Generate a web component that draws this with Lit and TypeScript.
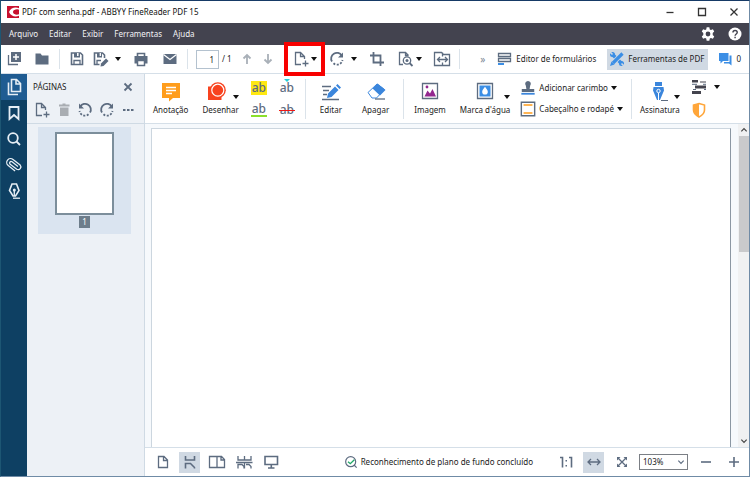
import { LitElement, html, css, svg, nothing } from "lit";
import { customElement, property, state } from "lit/decorators.js";
import { classMap } from "lit/directives/class-map.js";

// Every glyph is drawn on an 18 x 18 grid.
const icons: Record<string, unknown> = {
  logo: svg`<path d="M0 0h18v18H0z" fill="#c8102e"/><path d="M18 3.500C13 1 5.500 2.500 3 9c2.500 6.500 10 8 15 5.500v-2c-5 1.500-8-.5-8-3.500s3-5 8-3.500z" fill="#fff"/><circle cx="12" cy="9" r="3" fill="#c8102e"/>`,
  create: svg`<path d="M6 2h10v10H6z" fill="currentColor"/><path d="M3.500 5v9.500H13" class="l"/><path d="M11 4v6M8 7h6" stroke="#fff" stroke-width="1.500" fill="none"/>`,
  folder: svg`<path d="M2.500 3.500h5l1.500 2h6.500v9h-13z" fill="currentColor"/>`,
  save: svg`<path d="M3.500 3h9l2 2v9.500h-11z" class="l m"/><path d="M6 3h6v4.500H6z" fill="currentColor"/><path d="M9.800 3v3" stroke="#fff" stroke-width="1.500"/><path d="M6 14.500v-4h6v4" class="l"/>`,
  saveEdit: svg`<path d="M7.500 14.500h-5V3h8l2 2v3" class="l m"/><path d="M5 3h5v4.500H5z" fill="currentColor"/><path d="M8.300 3v3" stroke="#fff" stroke-width="1.300"/><path d="M5 14.500v-4h4" class="l"/><path d="M8.500 16.500l.5-3 5-5 2.500 2.500-5 5z" fill="currentColor"/>`,
  print: svg`<path d="M5.500 6V3.500h7V6" class="l m"/><path d="M2.500 6h13v7.500h-13z" fill="currentColor"/><path d="M5.500 10.500h7v5h-7z" fill="#fff" stroke="currentColor" stroke-width="1.500"/>`,
  mail: svg`<path d="M2.500 4h13v10h-13z" fill="currentColor"/><path d="M2.500 4.500l6.500 5 6.500-5" stroke="#fff" stroke-width="1.200" fill="none"/>`,
  up: svg`<path d="M9 14V5M5.500 8.500L9 5l3.500 3.500" class="l w"/>`,
  down: svg`<path d="M9 4v9M5.500 9.500L9 13l3.500-3.500" class="l w"/>`,
  pageAdd: svg`<path d="M9 14.500H3.500v-12h5l4 4V9M8.500 2.500v4h4" class="l"/><path d="M13.500 10.500v6M10.500 13.500h6" class="l"/>`,
  rotateRight: svg`<path d="M13.700 5.500A5.500 5.500 0 0 0 4 11.500" class="l w"/><path d="M15 2.500v5h-5z" fill="currentColor"/><path d="M5.500 13.300A5.500 5.500 0 0 0 14.500 10" class="l w" stroke-dasharray="2 1.500"/>`,
  rotateLeft: svg`<path d="M4.300 5.500A5.500 5.500 0 0 1 14 11.500" class="l w"/><path d="M3 2.500v5h5z" fill="currentColor"/><path d="M12.500 13.300A5.500 5.500 0 0 1 3.500 10" class="l w" stroke-dasharray="2 1.500"/>`,
  crop: svg`<path d="M5.500 2v10.500H16M2 5.500h10.500V16" class="l w"/>`,
  pageSearch: svg`<path d="M6 14.500H2.500v-12h6l3 3M8.500 2.500v3h3" class="l"/><circle cx="10" cy="10.500" r="3.700" class="l"/><circle cx="10" cy="10.500" r="1.500" fill="currentColor"/><path d="M12.500 13l3 3" class="l w"/>`,
  pageWidth: svg`<path d="M1.500 7V2.500h7l2 2h6V7M1.500 11.500v4h15v-4M1.500 6v6M16.500 6v6M9.500 2.500v4M9.500 12.500v3" class="l"/><path d="M5 9.500h9M7 7L4.500 9.500 7 12M12 7l2.500 2.500L12 12" class="l"/>`,
  form: svg`<path d="M2.500 3.500h12v3h-12zM2.500 8.500h12v3h-12z" class="l"/><path d="M2 13h6v2H2z" fill="#3b8ee5"/>`,
  tools: svg`<path d="M4 4l10 10" stroke="#3b8ee5" stroke-width="3.500"/><circle cx="4.500" cy="4.500" r="2.500" fill="#3b8ee5"/><circle cx="13.500" cy="13.500" r="2.500" fill="#3b8ee5"/><path d="M2 2l2.500 2.500M13.500 13.500L16 16" stroke="#d0d9e3" stroke-width="1.600"/><path d="M14 4L4 14" stroke="#d0d9e3" stroke-width="5"/><path d="M14.500 3.500L5 13" stroke="#3b8ee5" stroke-width="3.200"/><path d="M3.500 11.500l3 3L2 16z" fill="#3b8ee5"/>`,
  chat: svg`<path d="M3 3h9.500v8H7l-2.500 2.500V11H3z" fill="#3b8ee5"/><path d="M13.500 5.500H15.500v10L13 13.500H8v-1.500h5.500z" fill="#3b8ee5"/>`,
  gear: svg`<path fill="#fff" fill-rule="evenodd" d="M7.500 1.500h3l.5 2.300 1.300.7 2.200-.8L16 6.300 14.300 8v2l1.700 1.700-1.500 2.600-2.200-.8-1.300.7-.5 2.300h-3L7 14.200l-1.300-.7-2.200.8L2 11.700 3.700 10V8L2 6.300l1.500-2.600 2.200.8L7 3.800zM9 6.300a2.700 2.700 0 1 0 0 5.400 2.700 2.700 0 0 0 0-5.400z"/>`,
  help: svg`<circle cx="9" cy="9" r="7.300" fill="#fff"/><path d="M6.700 7.300c0-3 4.800-3 4.800 0 0 1.700-2.400 1.700-2.400 3.700M9.100 12v1.800" stroke="#43434f" stroke-width="1.600" fill="none"/>`,
  pages: svg`<path d="M6.500 1.500h5l4 4v8h-9z M11 1.500V6h4.500" class="l m"/><path d="M3.500 4.500v12H13" class="l m"/>`,
  bookmark: svg`<path d="M4.500 3h9v12L9 11l-4.500 4z" class="l w"/>`,
  search: svg`<circle cx="8" cy="8" r="4.800" class="l w"/><path d="M11.500 11.500l3.500 3.500" class="l w"/>`,
  clip: svg`<path transform="rotate(38 9 9)" d="M13.500 13H4.800a3.900 3.900 0 0 1 0-7.800h9a2.800 2.800 0 0 1 0 5.500H5.500a1.500 1.500 0 0 1 0-3h7.500" class="l"/>`,
  pen: svg`<path d="M7 2h4.500l2.500 6.500-3.500 5.500H8L4.500 8.500z" class="l m"/><path d="M9.300 8v6" class="l"/><circle cx="9.300" cy="8" r="1.500" fill="currentColor"/><path d="M8 16.200h7" class="l"/>`,
  close: svg`<path d="M5.500 5.500l7 7M12.500 5.500l-7 7" class="l w"/>`,
  trash: svg`<path d="M5 6.500h8.500V15H5zM4 3.500h3.500v-1h3v1h4v2H4z" fill="currentColor"/>`,
  more: svg`<path d="M4 8h2.500v2H4zM8 8h2.500v2H8zM12 8h2.500v2H12z" fill="currentColor"/>`,
  note: svg`<path d="M0 1h18v15h-7l-4 3.500V16H0z" fill="#ff9d1c"/><path d="M4 5.500h10M4 8.500h10M4 11.500h6" stroke="#fff" stroke-width="1.300"/>`,
  draw: svg`<path d="M0 4.500h13.500V18H0z" fill="#f8431f"/><circle cx="9.800" cy="8.200" r="8" fill="#f8431f"/><circle cx="9.800" cy="8.200" r="6" fill="#f8431f" stroke="#fff" stroke-width="1.200"/>`,
  edit: svg`<path d="M0 4.500h9M1 8.500h6M1 12.500h4M0 17.500h17" stroke="currentColor" stroke-width="1.300"/><path d="M5 16l1-4.500 7-7 3.500 3.500-7 7zM14 3.500L15.500 2l3.500 3.500L17.500 7z" fill="#3b86dc"/>`,
  erase: svg`<path d="M1 10.500L10 2l7.500 5.500-8 8.500H5z" fill="#fff" stroke="#3b86dc" stroke-width="1"/><path d="M5.500 6.500l5-5L18.500 8 13 13.500z" fill="#3b86dc"/><path d="M8 17h10" stroke="currentColor" stroke-width="1.300"/>`,
  image: svg`<path d="M1.500 1.500h15v15h-15z" class="l"/><path d="M3.500 14.500l3-6 2.500 3L11.500 7l3.500 7.500z" fill="#93278f"/><circle cx="6" cy="5" r="1.400" fill="#93278f"/>`,
  water: svg`<path d="M1.500 1.500h15v15h-15z" class="l"/><path d="M3.500 3.500h11v11h-11z" fill="#3b8ee5"/><path d="M9 4.700c2 2.500 2.800 3.700 2.800 5A2.700 2.700 0 0 1 9 12.500a2.700 2.700 0 0 1-2.800-2.800C6.200 8.400 7 7.200 9 4.700z" fill="#fff"/>`,
  stamp: svg`<path d="M9 1a3.300 3.300 0 0 1 2.500 5.300L10.800 10H16v3.500H2V10h5.200l-.7-3.700A3.300 3.300 0 0 1 9 1z" fill="currentColor"/><path d="M1.500 15.500h15" stroke="#3b86dc" stroke-width="2"/>`,
  header: svg`<path d="M1.500 1.500h15v15h-15z" class="l m"/><path d="M4 4.500h10M4 13.500h10" stroke="#ff9d1c" stroke-width="1.800"/>`,
  sign: svg`<path d="M6 0h7v4H6zM4.500 5h10l.5 3.500L11 18H8L4 8.500z" fill="#3b86dc"/><circle cx="9.500" cy="9" r="1.700" fill="#3b86dc" stroke="#fff"/><path d="M9.500 11v7" stroke="#fff"/><path d="M12 18.500h7" stroke="currentColor"/>`,
  redact: svg`<path d="M2 2h6v2.500H2zM2 13h9v3H2z" fill="#44444e"/><path d="M2 6.300h5M13 6.300h3M3 11.500h3M14 11.500h2" stroke="currentColor"/><path d="M5 7.500h11v3H5zM10 3.500h6v1h-6z" fill="#44444e"/>`,
  shield: svg`<path d="M9 2.500l5.500 1.500V9c0 3.500-2.500 5.500-5.500 7-3-1.500-5.500-3.500-5.500-7V4z" fill="none" stroke="#ffa63a" stroke-width="1.600"/><path d="M9 2.500V16C6 14.500 3.500 12.500 3.500 9V4z" fill="#ffa63a"/>`,
  single: svg`<path d="M4.500 3.500h5.500l3.500 3.500v7.500h-9z M9.500 3.500v4h4" class="l"/>`,
  scroll: svg`<path d="M4.500 3v4h9V3M4.500 15.500v-5h5l4 4v1M9.500 10.500l4 4" class="l m"/>`,
  double: svg`<path d="M1.500 3.500H9v11H1.500zM9 3.500h4.500l3 3v8H9M13 3.500v3.500h3.500" class="l"/>`,
  doubleScroll: svg`<path d="M3 3v4h13V3M9.500 3v4M1 9.500h16.500M3 15.500v-4h4l2 2v2M9.500 9.500v6M11 11.500h3l2 2v2" class="l"/>`,
  screen: svg`<path d="M3 3.500h12.500v8H3zM9.300 11.500v3.500M6 15h6.500" class="l m"/>`,
  checked: svg`<circle cx="8.500" cy="8.500" r="7.500" class="l w"/><path d="M13.500 13.500l4 4" class="l w"/><path d="M4.500 8.500l3.500 3 6-6" stroke="#1fa866" stroke-width="2" fill="none"/>`,
  actual: svg`<path d="M3 4.500h2.500v10M12 4.500h2.500v10" class="l m"/><path d="M8.500 7H10v1.500H8.500zM8.500 12H10v1.500H8.500z" fill="currentColor"/>`,
  fitWidth: svg`<path d="M3 9h12M6 6L3 9l3 3M12 6l3 3-3 3" class="l"/>`,
  fitPage: svg`<path d="M4.500 4.500l9 9M13.500 4.500l-9 9" class="l"/><path d="M4 7.500V4h3.500zM10.500 4H14v3.500zM14 10.500V14h-3.500zM7.500 14H4v-3.500z" fill="currentColor"/>`,
  minus: svg`<path d="M4 9h10" class="l m"/>`,
  plus: svg`<path d="M4 9h10M9 4v10" class="l m"/>`,
  min: svg`<path d="M5.500 9.500h7" class="l"/>`,
  max: svg`<path d="M5.500 5.500h7v7h-7z" class="l"/>`,
  winClose: svg`<path d="M5.500 5.500l7 7M12.500 5.500l-7 7" class="l"/>`,
  chevUp: svg`<path d="M5 11l4-4 4 4" class="l w"/>`,
  chevDown: svg`<path d="M5 7l4 4 4-4" class="l w"/>`,
};

const icon = (name: string, size = "") =>
  html`<svg class="icon ${size}" viewBox="0 0 18 18" aria-hidden="true">${icons[name]}</svg>`;
const caret = html`<svg class="caret" viewBox="0 0 6 4" aria-hidden="true"><path d="M0 0h6L3 4z" fill="#111"/></svg>`;

const shared = css`
  * {
    box-sizing: border-box;
  }
  :host {
    display: block;
  }
  button {
    display: flex;
    align-items: center;
    padding: 0;
    border: 0;
    background: none;
    color: inherit;
    font: inherit;
    white-space: nowrap;
  }
  .icon {
    display: block;
    flex: none;
    width: 18px;
    height: 18px;
    overflow: visible;
  }
  .icon.small {
    width: 12px;
    height: 12px;
  }
  .icon.medium {
    width: 16px;
    height: 16px;
  }
  .caret {
    display: block;
    flex: none;
    width: 6px;
    height: 4px;
  }
  .l {
    fill: none;
    stroke: currentColor;
    stroke-width: 1.3;
  }
  .m {
    stroke-width: 1.6;
  }
  .w {
    stroke-width: 1.8;
  }
  .sep {
    flex: none;
    width: 1px;
    background: #dbe3ea;
  }
  .slate {
    color: #5d6c80;
  }
`;

@customElement("title-bar")
class TitleBar extends LitElement {
  static styles = [
    shared,
    css`
      .title {
        display: flex;
        align-items: center;
        height: 22px;
        padding: 0 6px;
        background: #fff;
        color: #111;
      }
      .name {
        flex: 1;
        margin-left: 3px;
      }
      .controls {
        display: flex;
        gap: 14px;
        color: #333;
      }
      .menu {
        display: flex;
        align-items: center;
        gap: 11px;
        height: 22px;
        padding: 0 6px 0 8px;
        background: #43434f;
        color: #f2f2f5;
      }
      .right {
        display: flex;
        gap: 11px;
        margin-left: auto;
      }
    `,
  ];
  render() {
    return html`
      <header class="title">
        ${icon("logo", "small")}
        <span class="name">PDF com senha.pdf - ABBYY FineReader PDF 15</span>
        <div class="controls">
          <button aria-label="Minimizar">${icon("min")}</button>
          <button aria-label="Maximizar">${icon("max")}</button>
          <button aria-label="Fechar">${icon("winClose")}</button>
        </div>
      </header>
      <nav class="menu">
        ${["Arquivo", "Editar", "Exibir", "Ferramentas", "Ajuda"].map((m) => html`<button>${m}</button>`)}
        <div class="right">
          <button aria-label="Opções">${icon("gear", "medium")}</button>
          <button aria-label="Ajuda">${icon("help", "medium")}</button>
        </div>
      </nav>
    `;
  }
}

@customElement("main-toolbar")
class MainToolbar extends LitElement {
  static styles = [
    shared,
    css`
      .bar {
        display: flex;
        align-items: center;
        height: 29px;
        padding: 0 8px 0 4px;
        border-bottom: 1px solid #d5dfe8;
        background: #fff;
        color: #222;
      }
      .group {
        display: flex;
        align-items: center;
        gap: 10px;
      }
      .tight {
        gap: 6px;
      }
      .loose {
        gap: 11px;
      }
      .sep {
        height: 20px;
        margin: 0 8px;
      }
      .drop {
        gap: 5px;
      }
      .near {
        gap: 1px;
      }
      .page {
        width: 23px;
        height: 19px;
        padding: 0 4px;
        border: 1px solid #b4c2cf;
        background: #fff;
        color: #222;
        font: inherit;
        text-align: right;
      }
      .pager {
        display: flex;
        align-items: center;
        gap: 3px;
      }
      .arrows {
        display: flex;
        gap: 3px;
        margin: 0 15px 0 6px;
        color: #a9b0b8;
      }
      .marked {
        position: relative;
      }
      .mark {
        position: absolute;
        z-index: 2;
        inset: -8px;
        border: 4px solid #f80000;
      }
      .panels {
        display: flex;
        align-items: center;
        margin-left: auto;
      }
      .more {
        margin-right: 11px;
        color: #7c8796;
        font-size: 10px;
      }
      .panel {
        gap: 2px;
        height: 21px;
      }
      .active {
        margin: 0 8px 0 11px;
        padding: 0 4px 0 1px;
        background: #d0d9e3;
      }
    `,
  ];
  render() {
    return html`
      <div class="bar">
        <div class="group slate">
          <button aria-label="Criar">${icon("create")}</button>
          <button aria-label="Abrir">${icon("folder")}</button>
        </div>
        <span class="sep"></span>
        <div class="group loose slate">
          <div class="group tight">
            <button aria-label="Salvar">${icon("save")}</button>
            <button class="drop" aria-label="Salvar como">${icon("saveEdit")}${caret}</button>
          </div>
          <button aria-label="Imprimir">${icon("print")}</button>
          <button aria-label="Enviar por e-mail">${icon("mail")}</button>
        </div>
        <span class="sep"></span>
        <div class="pager">
          <input class="page" aria-label="Página" value="1" />
          <span>/ 1</span>
        </div>
        <div class="arrows">
          <button aria-label="Página anterior">${icon("up")}</button>
          <button aria-label="Próxima página">${icon("down")}</button>
        </div>
        <div class="group loose slate">
          <button class="drop near marked" aria-label="Adicionar páginas">
            ${icon("pageAdd")}${caret}<span class="mark"></span>
          </button>
          <button class="drop" aria-label="Girar">${icon("rotateRight")}${caret}</button>
          <button aria-label="Recortar">${icon("crop")}</button>
          <button class="drop near" aria-label="Reconhecer">${icon("pageSearch")}${caret}</button>
          <button aria-label="Ajustar">${icon("pageWidth")}</button>
        </div>
        <span class="sep"></span>
        <div class="panels">
          <button class="more" aria-label="Mais ferramentas">»</button>
          <button class="panel"><span class="slate">${icon("form")}</span>Editor de formulários</button>
          <button class="panel active">${icon("tools")}Ferramentas de PDF</button>
          <button class="panel" aria-label="Comentários">${icon("chat")}0</button>
        </div>
      </div>
    `;
  }
}

@customElement("side-panel")
class SidePanel extends LitElement {
  static styles = [
    shared,
    css`
      :host {
        display: flex;
      }
      .rail {
        width: 26px;
        background: #0e4063;
        color: #e6eef5;
      }
      .tab {
        justify-content: center;
        width: 100%;
        height: 26px;
      }
      .on {
        background: #1f5c92;
      }
      .panel {
        width: 118px;
        border-right: 1px solid #cfdae4;
        background: #edf1f6;
      }
      .head,
      .tools {
        display: flex;
        align-items: center;
        justify-content: space-between;
        padding: 0 7px 0 6px;
      }
      .head {
        height: 26px;
        color: #222;
      }
      .tools {
        height: 24px;
        padding-bottom: 4px;
        border-bottom: 1px solid #cfdae4;
      }
      .off {
        color: #a9adb2;
      }
      .thumb {
        display: flex;
        flex-direction: column;
        align-items: center;
        gap: 1px;
        height: 107px;
        margin: 3px 13px 0 11px;
        padding-top: 5px;
        background: #dae4f0;
      }
      .sheet {
        width: 59px;
        height: 83px;
        border: 2px solid #7c8e9b;
        background: #fff;
      }
      .num {
        padding: 0 3px;
        background: #6d7d8b;
        color: #fff;
        line-height: 12px;
      }
    `,
  ];
  @state() private tab = "pages";
  render() {
    const tabs: [string, string][] = [
      ["pages", "Páginas"],
      ["bookmark", "Marcadores"],
      ["search", "Pesquisar"],
      ["clip", "Anexos"],
      ["pen", "Assinaturas"],
    ];
    return html`
      <nav class="rail">
        ${tabs.map(
          ([id, label]) => html`<button
            class=${classMap({ tab: true, on: this.tab === id })}
            aria-label=${label}
            @click=${() => (this.tab = id)}
          >
            ${icon(id)}
          </button>`
        )}
      </nav>
      <aside class="panel">
        <div class="head">
          <span>PÁGINAS</span>
          <button class="slate" aria-label="Fechar painel">${icon("close")}</button>
        </div>
        <div class="tools slate">
          <button aria-label="Adicionar">${icon("pageAdd")}</button>
          <button class="off" aria-label="Excluir">${icon("trash")}</button>
          <button aria-label="Girar à esquerda">${icon("rotateLeft")}</button>
          <button aria-label="Girar à direita">${icon("rotateRight")}</button>
          <button aria-label="Mais">${icon("more")}</button>
        </div>
        <div class="thumb">
          <div class="sheet"></div>
          <span class="num">1</span>
        </div>
      </aside>
    `;
  }
}

@customElement("tool-button")
class ToolButton extends LitElement {
  static styles = [
    shared,
    css`
      .tool {
        flex-direction: column;
        gap: 4px;
        color: #222;
        line-height: 12px;
      }
      .art {
        display: grid;
        grid-template-columns: 1fr auto 1fr;
        align-items: end;
        width: 0;
        min-width: 100%;
      }
      .drop {
        grid-template-columns: 1fr auto minmax(13px, 1fr);
      }
      .art .icon {
        grid-column: 2;
      }
      .art .caret {
        justify-self: end;
        margin-bottom: 1px;
      }
    `,
  ];
  @property() icon = "";
  @property() label = "";
  @property({ type: Boolean }) menu = false;
  render() {
    return html`<button class="tool">
      <span class=${classMap({ art: true, slate: true, drop: this.menu })}>
        ${icon(this.icon)}${this.menu ? caret : nothing}
      </span>
      ${this.label}
    </button>`;
  }
}

@customElement("tool-ribbon")
class ToolRibbon extends LitElement {
  static styles = [
    shared,
    css`
      .ribbon {
        display: flex;
        align-items: center;
        height: 50px;
        padding: 0 8px;
        border-bottom: 1px solid #d5dfe8;
        background: #fff;
        color: #222;
      }
      .group {
        display: flex;
        gap: 14px;
      }
      .wide {
        gap: 20px;
        padding: 0 4px;
      }
      .sep {
        height: 40px;
        margin: 0 10px;
      }
      .snug {
        margin: 0 8px;
      }
      .marks {
        display: grid;
        grid-template-columns: 16px 16px;
        gap: 8px 12px;
        margin-left: 12px;
      }
      .ab {
        justify-content: center;
        height: 14px;
        color: #5d6c80;
        font-size: 12px;
        font-weight: 500;
        line-height: 14px;
      }
      .hi {
        background: #ffe812;
      }
      .under {
        border-bottom: 2px solid #8be02c;
      }
      .ins,
      .strike {
        position: relative;
      }
      .tick {
        position: absolute;
        top: -2px;
        left: 5px;
        border: 3px solid transparent;
        border-top-color: #25cfd8;
        border-bottom: 0;
      }
      .line {
        position: absolute;
        inset: 7px 0 auto;
        height: 1px;
        background: #f01818;
      }
      .rows {
        display: flex;
        flex-direction: column;
        gap: 5px;
      }
      .after {
        margin-left: 10px;
      }
      .row {
        gap: 3px;
      }
      .far {
        gap: 6px;
      }
    `,
  ];
  render() {
    return html`
      <div class="ribbon">
        <div class="group">
          <tool-button icon="note" label="Anotação"></tool-button>
          <tool-button icon="draw" label="Desenhar" menu></tool-button>
        </div>
        <div class="marks">
          <button class="ab hi" aria-label="Realçar">ab</button>
          <button class="ab ins" aria-label="Inserir">ab<span class="tick"></span></button>
          <button class="ab under" aria-label="Sublinhar">ab</button>
          <button class="ab strike" aria-label="Riscar">ab<span class="line"></span></button>
        </div>
        <span class="sep"></span>
        <div class="group wide">
          <tool-button icon="edit" label="Editar"></tool-button>
          <tool-button icon="erase" label="Apagar"></tool-button>
        </div>
        <span class="sep"></span>
        <div class="group">
          <tool-button icon="image" label="Imagem"></tool-button>
          <tool-button icon="water" label="Marca d'água" menu></tool-button>
        </div>
        <div class="rows after">
          <button class="row"><span class="slate">${icon("stamp", "medium")}</span>Adicionar carimbo ${caret}</button>
          <button class="row"><span class="slate">${icon("header", "medium")}</span>Cabeçalho e rodapé ${caret}</button>
        </div>
        <span class="sep snug"></span>
        <tool-button icon="sign" label="Assinatura" menu></tool-button>
        <div class="rows after slate">
          <button class="row far" aria-label="Ocultar">${icon("redact")}${caret}</button>
          <button class="row" aria-label="Proteger">${icon("shield")}</button>
        </div>
      </div>
    `;
  }
}

@customElement("status-bar")
class StatusBar extends LitElement {
  static styles = [
    shared,
    css`
      .status {
        display: flex;
        align-items: center;
        height: 29px;
        padding: 0 5px 0 7px;
        border-top: 1px solid #d5dfe8;
        background: #fff;
        color: #222;
      }
      .views {
        display: flex;
        gap: 6px;
      }
      .cell {
        justify-content: center;
        width: 21px;
        height: 21px;
      }
      .on {
        background: #d0d9e3;
      }
      .info {
        display: flex;
        align-items: center;
        gap: 4px;
        margin-left: auto;
      }
      .zoom {
        display: flex;
        align-items: center;
        gap: 7px;
        margin-left: 22px;
      }
      .field {
        position: relative;
        color: #5d6c80;
      }
      .select {
        display: block;
        width: 49px;
        height: 16px;
        padding: 0 3px;
        border: 1px solid #7b7f85;
        border-radius: 0;
        appearance: none;
        background: #fff;
        color: #222;
        font: inherit;
      }
      .arrow {
        position: absolute;
        top: 2px;
        right: 1px;
        pointer-events: none;
      }
    `,
  ];
  render() {
    return html`
      <footer class="status">
        <div class="views slate">
          <button class="cell" aria-label="Página única">${icon("single")}</button>
          <button class="cell on" aria-label="Rolagem">${icon("scroll")}</button>
          <button class="cell" aria-label="Duas páginas">${icon("double")}</button>
          <button class="cell" aria-label="Rolagem dupla">${icon("doubleScroll")}</button>
          <button class="cell" aria-label="Tela inteira">${icon("screen")}</button>
        </div>
        <div class="info">
          <span class="slate">${icon("checked", "small")}</span>
          Reconhecimento de plano de fundo concluído
        </div>
        <div class="zoom slate">
          <button class="cell" aria-label="Tamanho real">${icon("actual")}</button>
          <button class="cell on" aria-label="Ajustar à largura">${icon("fitWidth")}</button>
          <button class="cell" aria-label="Ajustar à página">${icon("fitPage")}</button>
          <div class="field">
            <select class="select" aria-label="Zoom">
              <option>103%</option>
            </select>
            <span class="arrow">${icon("chevDown", "small")}</span>
          </div>
          <button class="cell" aria-label="Reduzir">${icon("minus")}</button>
          <button class="cell" aria-label="Ampliar">${icon("plus")}</button>
        </div>
      </footer>
    `;
  }
}

@customElement("app-root")
class AppRoot extends LitElement {
  static styles = [
    shared,
    css`
      :host {
        display: flex;
        flex-direction: column;
        height: 100vh;
        box-sizing: border-box;
        border: 1px solid #6f8ba6;
        border-top-color: #163a66;
        border-left-color: #1d5673;
        background: #fff;
        font-family: "Noto Sans", "Open Sans", sans-serif;
        font-size: 8px;
        line-height: 12px;
      }
      .body {
        display: flex;
        flex: 1;
        min-height: 0;
      }
      .content {
        display: flex;
        flex: 1;
        flex-direction: column;
        min-width: 0;
      }
      .view {
        display: flex;
        flex: 1;
        gap: 7px;
        min-height: 0;
        padding-left: 6px;
        background: #f6f9fc;
      }
      .paper {
        flex: 1;
        margin-top: 4px;
        border: 1px solid #ccd6df;
        border-right-color: #8b97a3;
        border-bottom: 0;
        background: #fff;
      }
      .scroll {
        display: flex;
        flex-direction: column;
        align-items: center;
        width: 11px;
        background: #f0f1f2;
        color: #444;
      }
      .grip {
        width: 10px;
        height: 36%;
        margin-bottom: auto;
        background: #c9cacc;
      }
    `,
  ];
  render() {
    return html`
      <title-bar></title-bar>
      <main-toolbar></main-toolbar>
      <div class="body">
        <side-panel></side-panel>
        <main class="content">
          <tool-ribbon></tool-ribbon>
          <div class="view">
            <div class="paper"></div>
            <div class="scroll">
              ${icon("chevUp", "small")}
              <div class="grip"></div>
              ${icon("chevDown", "small")}
            </div>
          </div>
          <status-bar></status-bar>
        </main>
      </div>
    `;
  }
}
